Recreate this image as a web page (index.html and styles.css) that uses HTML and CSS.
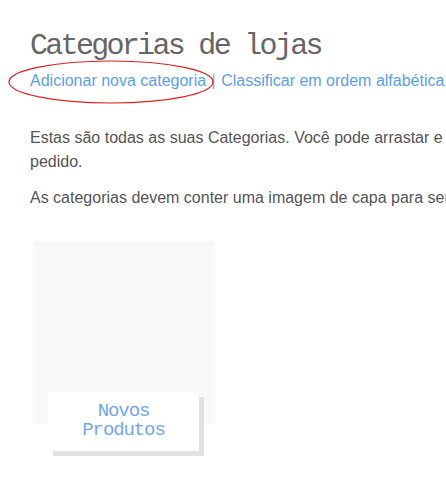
FILE: index.html
```html
<!DOCTYPE html>
<html lang="pt-BR">
<head>
  <meta charset="UTF-8">
  <title>Categorias de lojas</title>
  <link rel="stylesheet" href="styles.css">
</head>
<body>
  <div class="page">
    <h1 class="page-title">Categorias de lojas</h1>
    <div class="actions">
      <a href="#" class="action action-add">Adicionar nova categoria</a>
      <span class="sep">|</span>
      <a href="#" class="action">Classificar em ordem alfabética</a>
      <svg class="marker" width="206" height="44" viewBox="0 0 206 44">
        <ellipse cx="103" cy="22" rx="102" ry="21" fill="none" stroke="#e02020" stroke-width="1.2"/>
      </svg>
    </div>
    <p class="intro">Estas são todas as suas Categorias. Você pode arrastar e soltar para alterar o pedido.</p>
    <p class="intro">As categorias devem conter uma imagem de capa para serem exibidas.</p>
    <div class="categories">
      <div class="category">
        <div class="cover"></div>
        <div class="label">Novos<br>Produtos</div>
      </div>
    </div>
  </div>
</body>
</html>
```

FILE: styles.css
```css
:root {
  --text: #555;
  --title: #666;
  --link: #5c9eee;
  --cover: #f8f8f8;
}
html { overflow: hidden; }
body {
  margin: 0;
  background: #fff;
  font-family: 'Liberation Sans', Arial, sans-serif;
  color: var(--text);
}
.page {
  width: 600px;
  padding: 28px 0 20px 30px;
}
.page-title {
  margin: 0;
  font-family: 'Liberation Mono', 'Courier New', monospace;
  font-weight: 400;
  font-size: 30px;
  letter-spacing: -2.7px;
  line-height: 36px;
  color: var(--title);
}
.actions {
  position: relative;
  margin-top: 5px;
  font-size: 16px;
  line-height: 24px;
  white-space: nowrap;
}
.action { color: var(--link); text-decoration: none; }
.sep { color: #8aa6c8; margin: 0 1px 0 1px; }
.marker {
  position: absolute;
  left: -22px;
  top: -9px;
  pointer-events: none;
}
.intro {
  width: 585px;
  margin: 33px 0 0;
  font-size: 16px;
  line-height: 24px;
}
.intro + .intro { margin-top: 12px; }
.categories {
  display: flex;
  margin-top: 31px;
  padding-left: 3px;
}
.category {
  display: flex;
  flex-direction: column;
  width: 182px;
}
.cover {
  height: 183px;
  background: var(--cover);
}
.label {
  margin: -32px 0 0 15px;
  width: 151px;
  height: 59px;
  box-sizing: border-box;
  padding-top: 10px;
  background: #fff;
  box-shadow: 5px 5px 0 #e2e2e2;
  text-align: center;
  font-family: 'Liberation Mono', 'Courier New', monospace;
  font-size: 19px;
  letter-spacing: -1.1px;
  line-height: 19px;
  color: #72a6f0;
}
```
